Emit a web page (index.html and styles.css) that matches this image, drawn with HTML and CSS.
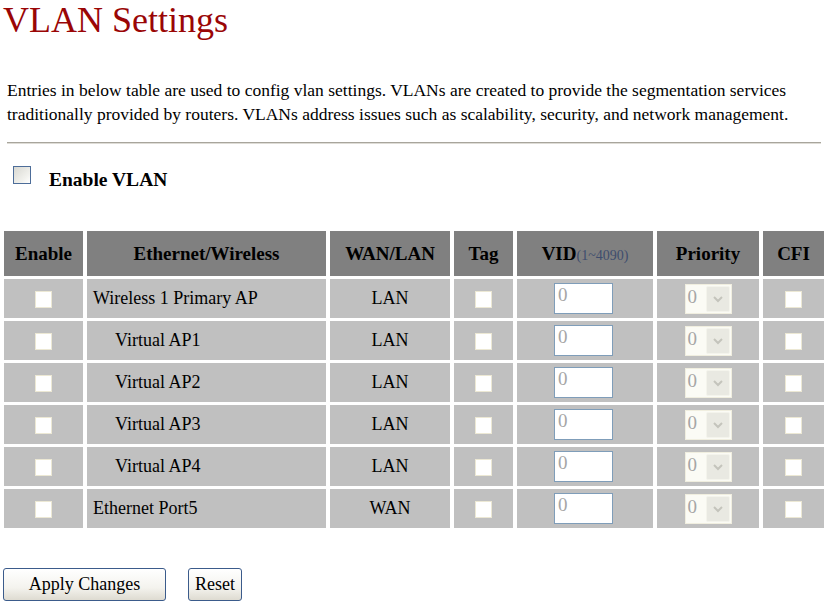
FILE: index.html
```html
<!DOCTYPE html>
<html>
<head>
<meta charset="utf-8">
<title>VLAN Settings</title>
<link rel="stylesheet" href="styles.css">
</head>
<body>
<h1 class="title">VLAN Settings</h1>
<p class="intro">Entries in below table are used to config vlan settings. VLANs are created to provide the segmentation services<br>traditionally provided by routers. VLANs address issues such as scalability, security, and network management.</p>
<hr class="rule">
<div class="enable-row"><span class="cb-main"></span><span class="enable-label">Enable VLAN</span></div>
<table class="vlan">
  <colgroup>
    <col class="c-en"><col class="c-eth"><col class="c-wan"><col class="c-tag"><col class="c-vid"><col class="c-pri"><col class="c-cfi">
  </colgroup>
  <thead>
    <tr><th>Enable</th><th>Ethernet/Wireless</th><th>WAN/LAN</th><th>Tag</th><th>VID<span class="range">(1~4090)</span></th><th>Priority</th><th>CFI</th></tr>
  </thead>
  <tbody>
    <tr><td class="ctr"><span class="cb"></span></td><td class="name">Wireless 1 Primary AP</td><td class="ctr">LAN</td><td class="ctr"><span class="cb"></span></td><td class="ctr"><span class="txt">0</span></td><td class="ctr"><span class="sel"><span class="sel-val">0</span><span class="sel-btn"><svg width="12" height="8" viewBox="0 0 12 8"><path d="M2 2 L6 6 L10 2" fill="none" stroke="#c4c4bc" stroke-width="2"/></svg></span></span></td><td class="ctr"><span class="cb"></span></td></tr>
    <tr><td class="ctr"><span class="cb"></span></td><td class="name sub">Virtual AP1</td><td class="ctr">LAN</td><td class="ctr"><span class="cb"></span></td><td class="ctr"><span class="txt">0</span></td><td class="ctr"><span class="sel"><span class="sel-val">0</span><span class="sel-btn"><svg width="12" height="8" viewBox="0 0 12 8"><path d="M2 2 L6 6 L10 2" fill="none" stroke="#c4c4bc" stroke-width="2"/></svg></span></span></td><td class="ctr"><span class="cb"></span></td></tr>
    <tr><td class="ctr"><span class="cb"></span></td><td class="name sub">Virtual AP2</td><td class="ctr">LAN</td><td class="ctr"><span class="cb"></span></td><td class="ctr"><span class="txt">0</span></td><td class="ctr"><span class="sel"><span class="sel-val">0</span><span class="sel-btn"><svg width="12" height="8" viewBox="0 0 12 8"><path d="M2 2 L6 6 L10 2" fill="none" stroke="#c4c4bc" stroke-width="2"/></svg></span></span></td><td class="ctr"><span class="cb"></span></td></tr>
    <tr><td class="ctr"><span class="cb"></span></td><td class="name sub">Virtual AP3</td><td class="ctr">LAN</td><td class="ctr"><span class="cb"></span></td><td class="ctr"><span class="txt">0</span></td><td class="ctr"><span class="sel"><span class="sel-val">0</span><span class="sel-btn"><svg width="12" height="8" viewBox="0 0 12 8"><path d="M2 2 L6 6 L10 2" fill="none" stroke="#c4c4bc" stroke-width="2"/></svg></span></span></td><td class="ctr"><span class="cb"></span></td></tr>
    <tr><td class="ctr"><span class="cb"></span></td><td class="name sub">Virtual AP4</td><td class="ctr">LAN</td><td class="ctr"><span class="cb"></span></td><td class="ctr"><span class="txt">0</span></td><td class="ctr"><span class="sel"><span class="sel-val">0</span><span class="sel-btn"><svg width="12" height="8" viewBox="0 0 12 8"><path d="M2 2 L6 6 L10 2" fill="none" stroke="#c4c4bc" stroke-width="2"/></svg></span></span></td><td class="ctr"><span class="cb"></span></td></tr>
    <tr><td class="ctr"><span class="cb"></span></td><td class="name">Ethernet Port5</td><td class="ctr">WAN</td><td class="ctr"><span class="cb"></span></td><td class="ctr"><span class="txt">0</span></td><td class="ctr"><span class="sel"><span class="sel-val">0</span><span class="sel-btn"><svg width="12" height="8" viewBox="0 0 12 8"><path d="M2 2 L6 6 L10 2" fill="none" stroke="#c4c4bc" stroke-width="2"/></svg></span></span></td><td class="ctr"><span class="cb"></span></td></tr>
  </tbody>
</table>
<div class="actions"><button class="btn btn-apply">Apply Changes</button><button class="btn btn-reset">Reset</button></div>
</body>
</html>
```
FILE: styles.css
```css
html, body {
  margin: 0;
  padding: 0;
  background: #ffffff;
}
body {
  font-family: "Liberation Serif", "Times New Roman", serif;
  color: #000000;
}
.title {
  margin: 0;
  padding-left: 3px;
  font-size: 36px;
  line-height: 40px;
  font-weight: normal;
  color: #9a0606;
}
.intro {
  margin: 38px 0 0 0;
  padding-left: 7px;
  font-size: 17.5px;
  line-height: 24px;
  white-space: nowrap;
}
.rule {
  margin: 16px 0 0 7px;
  width: 814px;
  height: 0;
  border: 0;
  border-top: 1px solid #a8a59c;
  border-bottom: 1px solid #dedcd6;
}
.enable-row {
  display: flex;
  align-items: center;
  margin-top: 22px;
  padding-left: 13px;
}
.cb-main {
  display: block;
  width: 16px;
  height: 16px;
  border: 1px solid #4d6d99;
  background: linear-gradient(135deg, #d8d8d2 0%, #f2f2ee 70%, #ffffff 100%);
  margin-bottom: 9px;
  margin-right: 18px;
}
.enable-label {
  font-weight: bold;
  font-size: 19.5px;
  line-height: 22px;
}
.vlan {
  margin-top: 35px;
  border-collapse: separate;
  border-spacing: 4px 3px;
  table-layout: fixed;
  width: 828px;
}
.c-en { width: 79px; }
.c-eth { width: 239px; }
.c-wan { width: 120px; }
.c-tag { width: 59px; }
.c-vid { width: 136px; }
.c-pri { width: 102px; }
.c-cfi { width: 61px; }
.vlan th {
  background: #808080;
  height: 45px;
  padding: 0;
  font-size: 19px;
  font-weight: bold;
  text-align: center;
  vertical-align: middle;
  white-space: nowrap;
}
.range {
  font-size: 14px;
  font-weight: normal;
  color: #3e4d6e;
}
.vlan td {
  background: #c0c0c0;
  height: 39px;
  padding: 0;
  font-size: 18px;
  vertical-align: middle;
  white-space: nowrap;
}
.vlan td.ctr {
  text-align: center;
}
.vlan td.name {
  padding-left: 6px;
}
.vlan td.sub {
  padding-left: 28px;
}
.cb {
  display: inline-block;
  vertical-align: middle;
  width: 15px;
  height: 15px;
  background: #ffffff;
  border: 1px solid #ece8d4;
}
.txt {
  display: inline-block;
  vertical-align: middle;
  box-sizing: border-box;
  width: 59px;
  height: 31px;
  border: 1px solid #7f9db9;
  background: #ffffff;
  color: #a6a6a6;
  font-size: 19px;
  line-height: 21px;
  text-align: left;
  padding-left: 3px;
  margin-right: 3px;
}
.sel {
  display: inline-flex;
  vertical-align: middle;
  box-sizing: border-box;
  width: 47px;
  height: 30px;
  border: 1px solid #f0eedf;
  background: #fbfbf5;
  padding: 1px;
}
.sel-val {
  width: 18px;
  color: #a6a6a6;
  font-size: 19px;
  line-height: 21px;
  text-align: left;
  padding-left: 1px;
}
.sel-btn {
  flex: 1;
  display: flex;
  align-items: center;
  justify-content: center;
  background: #e9e9e2;
  border: 1px solid #f4f4ec;
  border-radius: 2px;
}
.actions {
  display: flex;
  gap: 22px;
  margin-top: 37px;
  padding-left: 3px;
}
.btn {
  box-sizing: border-box;
  height: 33px;
  padding: 0;
  border: 1px solid #3b5b8b;
  border-radius: 3px;
  background: linear-gradient(180deg, #ffffff 0%, #f4f3ee 60%, #dedbd1 100%);
  font-family: "Liberation Serif", "Times New Roman", serif;
  font-size: 18px;
  color: #000000;
}
.btn-apply { width: 163px; }
.btn-reset { width: 54px; }
```
